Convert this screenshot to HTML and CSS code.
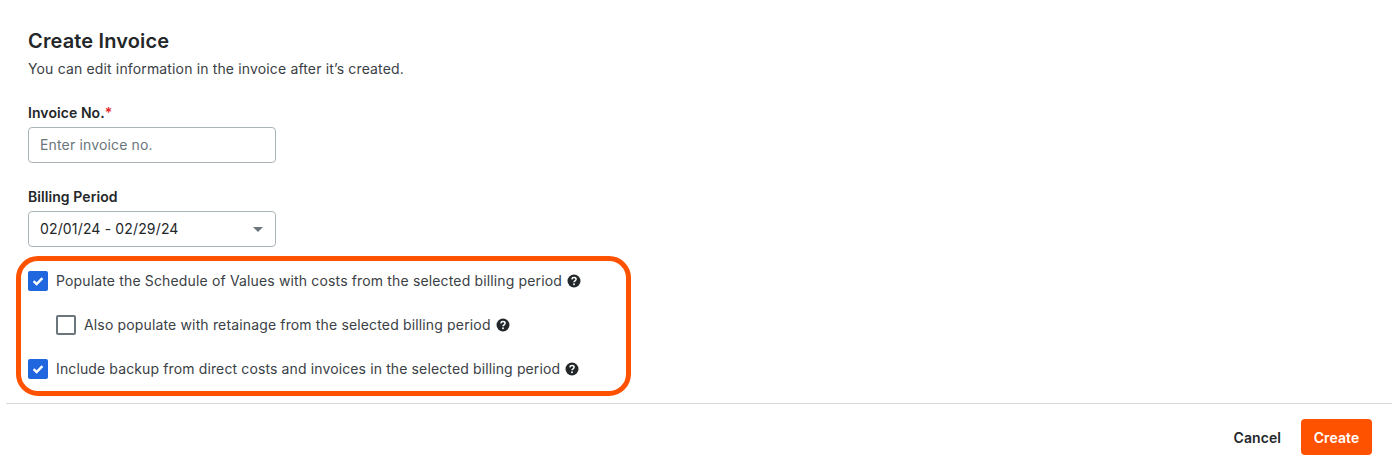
FILE: index.html
```html
<!DOCTYPE html>
<html lang="en">
<head>
  <meta charset="UTF-8" />
  <title>Create Invoice</title>
  <link rel="stylesheet" href="styles.css">
</head>
<body>
  <div class="modal">
    <div class="content">
      <h2>Create Invoice</h2>
      <p class="subtitle">You can edit information in the invoice after it’s created.</p>

      <div class="field">
        <label class="label">Invoice No.<span class="req">*</span></label>
        <div class="input placeholder">Enter invoice no.</div>
      </div>

      <div class="field">
        <label class="label">Billing Period</label>
        <div class="input select">
          <span>02/01/24 - 02/29/24</span>
          <span class="caret"></span>
        </div>
      </div>

      <div class="options">
        <div class="highlight"></div>
        <div class="option">
          <span class="box checked">
            <svg viewBox="0 0 20 20" width="20" height="20"><path d="M5.6 10.2l3 2.9 5.8-6" fill="none" stroke="#fff" stroke-width="2.4"/></svg>
          </span>
          <span>Populate the Schedule of Values with costs from the selected billing period</span>
          <svg class="help" viewBox="0 0 14 14" width="14" height="14"><circle cx="7" cy="7" r="6.5" fill="#232729"/><path d="M4.9 5.4c.1-1.200 1-1.800 2.100-1.800 1.200 0 2.100.7 2.100 1.700 0 1.500-2.100 1.500-2.100 3" fill="none" stroke="#fff" stroke-width="1.500"/><circle cx="7" cy="10.300" r=".95" fill="#fff"/></svg>
        </div>
        <div class="option indent">
          <span class="box"></span>
          <span>Also populate with retainage from the selected billing period</span>
          <svg class="help" viewBox="0 0 14 14" width="14" height="14"><circle cx="7" cy="7" r="6.5" fill="#232729"/><path d="M4.9 5.4c.1-1.200 1-1.800 2.100-1.800 1.200 0 2.100.7 2.100 1.700 0 1.500-2.100 1.500-2.100 3" fill="none" stroke="#fff" stroke-width="1.500"/><circle cx="7" cy="10.300" r=".95" fill="#fff"/></svg>
        </div>
        <div class="option">
          <span class="box checked">
            <svg viewBox="0 0 20 20" width="20" height="20"><path d="M5.6 10.2l3 2.9 5.8-6" fill="none" stroke="#fff" stroke-width="2.4"/></svg>
          </span>
          <span class="tight">Include backup from direct costs and invoices in the selected billing period</span>
          <svg class="help" viewBox="0 0 14 14" width="14" height="14"><circle cx="7" cy="7" r="6.5" fill="#232729"/><path d="M4.9 5.4c.1-1.200 1-1.800 2.100-1.800 1.200 0 2.100.7 2.100 1.700 0 1.500-2.100 1.500-2.100 3" fill="none" stroke="#fff" stroke-width="1.500"/><circle cx="7" cy="10.300" r=".95" fill="#fff"/></svg>
        </div>
      </div>
    </div>

    <div class="footer">
      <button class="btn btn-text">Cancel</button>
      <button class="btn btn-primary">Create</button>
    </div>
  </div>
</body>
</html>
```

FILE: styles.css
```css
* {
  box-sizing: border-box;
}
body {
  font-family: "Inter", sans-serif;
  font-size: 14px;
  line-height: 20px;
  letter-spacing: 0.15px;
  color: #232729;
  background-color: #fff;
  margin: 0;
}
.modal {
  padding: 0 6px;
}
.content {
  padding: 28px 22px 0 22px;
}
h2 {
  margin: 0;
  font-size: 20px;
  line-height: 26px;
  font-weight: 600;
  letter-spacing: 0.15px;
}
.subtitle {
  margin: 5px 0 0 0;
  color: #3a4145;
}
.field {
  margin-top: 24px;
  width: 248px;
}
.label {
  display: block;
  font-weight: 600;
  margin-bottom: 4px;
  letter-spacing: 0.07px;
}
.req {
  color: #e5252a;
}
.input {
  height: 36px;
  padding: 0 11px;
  border: 1px solid #acb5b9;
  border-radius: 4px;
  display: flex;
  align-items: center;
  justify-content: space-between;
}
.placeholder {
  color: #6a767c;
}
.select {
  color: #232729;
}
.caret {
  width: 0;
  height: 0;
  margin-right: 1px;
  border-left: 5.5px solid transparent;
  border-right: 5.5px solid transparent;
  border-top: 5px solid #6a767c;
}
.options {
  position: relative;
  margin-top: 24px;
  padding-bottom: 14px;
  display: flex;
  flex-direction: column;
  gap: 24px;
}
.option {
  display: flex;
  align-items: center;
  height: 20px;
  color: #3a4145;
}
.option.indent {
  padding-left: 28px;
}
.tight {
  letter-spacing: 0.125px;
}
.box {
  width: 20px;
  height: 20px;
  flex: none;
  margin-right: 8px;
  border: 2px solid #6a767c;
  border-radius: 2px;
}
.box.checked {
  border: none;
  background-color: #2066df;
}
.box svg {
  display: block;
}
.help {
  flex: none;
  margin-left: 5px;
}
.highlight {
  position: absolute;
  left: -12px;
  top: -15px;
  width: 615px;
  height: 140px;
  border: 5px solid #ff5200;
  border-radius: 22px;
}
.footer {
  margin-top: 10px;
  border-top: 1px solid #d6dadc;
  padding: 15px 20px 0 0;
  display: flex;
  justify-content: flex-end;
  align-items: center;
  gap: 20px;
}
.btn {
  font-family: inherit;
  font-size: 14px;
  font-weight: 600;
  letter-spacing: 0.07px;
  height: 36px;
  border: none;
  border-radius: 4px;
  cursor: pointer;
}
.btn-text {
  background: none;
  color: #232729;
  padding: 0;
}
.btn-primary {
  background-color: #ff5200;
  color: #fff;
  width: 71px;
  padding: 0;
}
```
